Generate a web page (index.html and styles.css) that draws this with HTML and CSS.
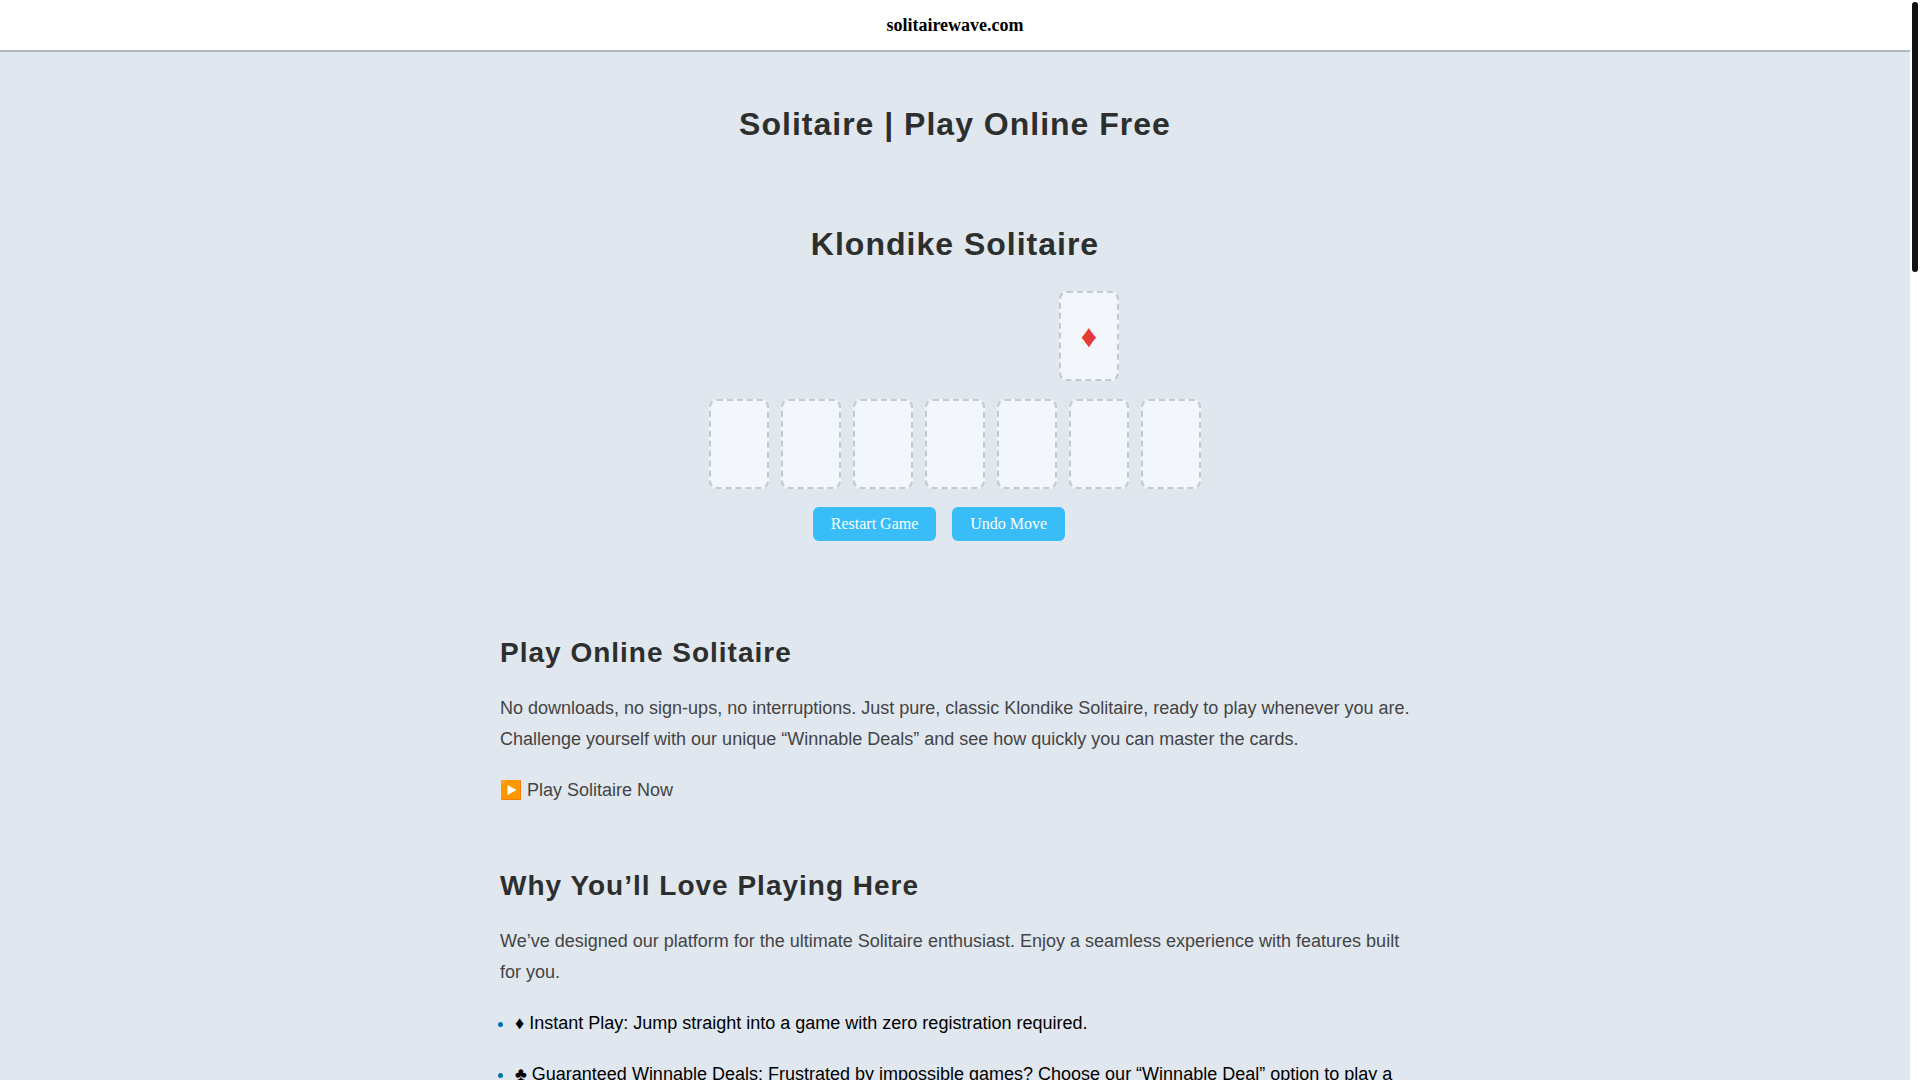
FILE: index.html
```html
<!DOCTYPE html>
<html lang="en">
<head>
<meta charset="utf-8">
<meta name="viewport" content="width=device-width, initial-scale=1">
<title>Solitaire | Play Online Free</title>
<link rel="stylesheet" href="styles.css">
</head>
<body>
<div class="page">
  <header class="site-header"><a class="site-name" href="#">solitairewave.com</a></header>
  <main class="main">
    <h1 class="title">Solitaire | Play Online Free</h1>
    <section class="game">
      <h2 class="title game-title">Klondike Solitaire</h2>
      <div class="top-row">
        <div class="piles">
          <div class="slot slot-hidden"></div>
          <div class="slot slot-hidden"></div>
        </div>
        <div class="piles">
          <div class="slot slot-hidden"></div>
          <div class="slot slot-hidden"></div>
          <div class="slot slot-red">♦</div>
          <div class="slot slot-hidden"></div>
        </div>
      </div>
      <div class="piles">
        <div class="slot"></div>
        <div class="slot"></div>
        <div class="slot"></div>
        <div class="slot"></div>
        <div class="slot"></div>
        <div class="slot"></div>
        <div class="slot"></div>
      </div>
      <div class="controls">
        <button class="button" type="button">Restart Game</button>
        <button class="button" type="button">Undo Move</button>
      </div>
    </section>
    <article class="article">
      <section>
        <h2 class="heading">Play Online Solitaire</h2>
        <p class="text">No downloads, no sign-ups, no interruptions. Just pure, classic Klondike Solitaire, ready to play whenever you are. Challenge yourself with our unique “Winnable Deals” and see how quickly you can master the cards.</p>
        <p class="text"><svg class="play-icon" viewBox="0 0 22 22" aria-hidden="true"><rect x="1" y="1" width="20" height="20" rx="1" fill="#f57c00"/><rect x="1" y="1" width="19" height="19" rx="1" fill="#ff9800"/><path d="M2 4.500Q2 2 5 2" fill="none" stroke="#ffbd52" stroke-width="1" stroke-linecap="round"/><path d="M7.500 6v10l9-5z" fill="#fff"/></svg> Play Solitaire Now</p>
      </section>
      <section>
        <h2 class="heading">Why You’ll Love Playing Here</h2>
        <p class="text">We’ve designed our platform for the ultimate Solitaire enthusiast. Enjoy a seamless experience with features built for you.</p>
        <ul class="features">
          <li>♦ Instant Play: Jump straight into a game with zero registration required.</li>
          <li>♣ Guaranteed Winnable Deals: Frustrated by impossible games? Choose our “Winnable Deal” option to play a</li>
        </ul>
      </section>
    </article>
  </main>
</div>
<div class="scroll-track"><div class="scroll-thumb"></div></div>
</body>
</html>
```
FILE: styles.css
```css
* {
  box-sizing: border-box;
}

body {
  margin: 0;
  display: flex;
  height: 100vh;
  overflow: hidden;
  background: #fff;
  font-family: "Liberation Sans", Arial, sans-serif;
}

.page {
  flex: 1;
  overflow: hidden;
  background: #e0e7ef;
}

.scroll-track {
  width: 10px;
  padding: 2px;
}

.scroll-thumb {
  width: 6px;
  height: 25vh;
  border-radius: 3px;
  background: #111;
}

.site-header {
  display: flex;
  align-items: center;
  justify-content: center;
  height: 52px;
  border-bottom: 2px solid #b0b8c1;
  background: #fff;
}

.site-name {
  color: #000;
  font: bold 18px/20px "Liberation Serif", "Times New Roman", serif;
  text-decoration: none;
}

.main {
  max-width: 910px;
  margin: 0 auto;
  padding-top: 53px;
}

.title {
  margin: 0;
  color: #2d2f2e;
  font-size: 32px;
  line-height: 38px;
  letter-spacing: 1px;
  text-align: center;
}

.game {
  display: flex;
  flex-direction: column;
  align-items: center;
  gap: 18px;
  padding: 82px 0 95px;
}

.game-title {
  margin-bottom: 10px;
}

.top-row {
  display: flex;
  gap: 64px;
}

.piles {
  display: flex;
  gap: 12px;
}

.slot {
  display: flex;
  align-items: center;
  justify-content: center;
  width: 60px;
  height: 90px;
  border: 2px dashed #c0cad1;
  border-radius: 8px;
  background: #f3f6fb;
  font: 32px "Liberation Serif", "Times New Roman", serif;
}

.slot-hidden {
  visibility: hidden;
}

.slot-red {
  color: #e53935;
}

.controls {
  display: flex;
  gap: 16px;
  padding-right: 32px;
}

.button {
  height: 34px;
  padding: 0 18px;
  border: 0;
  border-radius: 6px;
  background: #38bdf8;
  color: #fff;
  font: 16px/18px "Liberation Serif", "Times New Roman", serif;
}

.article {
  display: flex;
  flex-direction: column;
  gap: 63px;
  font-size: 18px;
  line-height: 31px;
}

.heading {
  margin: 0 0 23px;
  color: #2d2f2e;
  font-size: 28px;
  line-height: 34px;
  letter-spacing: 1px;
}

.text {
  margin: 0 0 20px;
  color: #444;
}

.text:last-child {
  margin-bottom: 0;
}

.play-icon {
  width: 22px;
  height: 22px;
  vertical-align: -5px;
}

.features {
  margin: 0;
  padding-left: 15px;
}

.features li {
  margin-bottom: 20px;
}

.features li::marker {
  color: #0073aa;
}
```
